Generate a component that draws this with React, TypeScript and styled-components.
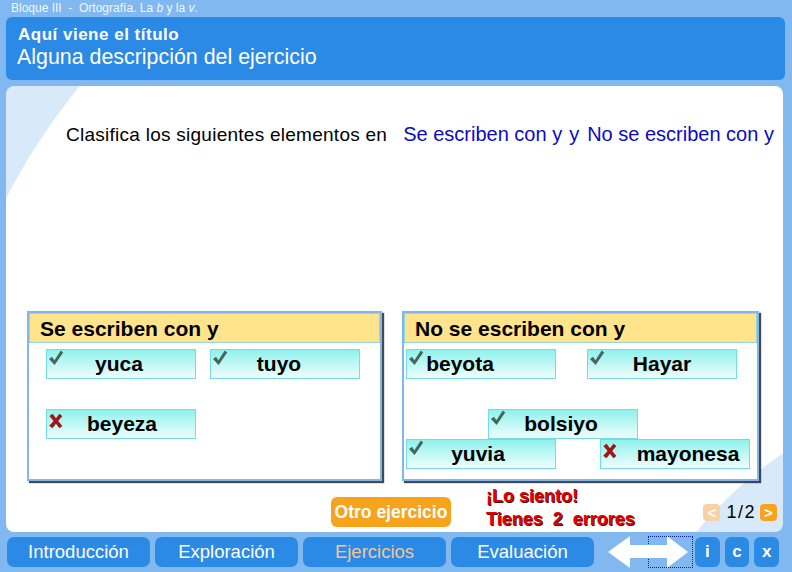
import React from "react";
import styled, { createGlobalStyle } from "styled-components";

const GlobalStyle = createGlobalStyle`
  html, body {
    margin: 0;
    padding: 0;
  }
  body {
    font-family: "Liberation Sans", Arial, sans-serif;
    background: #80b8ef;
  }
`;

const Frame = styled.div`
  width: 792px;
  height: 572px;
  display: flex;
  flex-direction: column;
  background: #80b8ef;
  overflow: hidden;
`;

const TopStrip = styled.div`
  height: 17px;
  padding-left: 11px;
  font-size: 12px;
  line-height: 16px;
  color: #f1f7fe;
  white-space: pre;
`;

const Header = styled.header`
  height: 64px;
  margin: 0 7px 0 6px;
  box-sizing: border-box;
  padding: 8px 0 0 12px;
  background: #2b8ae6;
  border-radius: 6px;
  color: #fff;
`;

const Title = styled.h1`
  margin: 0;
  font-size: 17px;
  font-weight: bold;
  line-height: 20px;
  letter-spacing: 0.5px;
`;

const Description = styled.p`
  margin: 0 0 0 -1px;
  font-size: 21.4px;
  line-height: 24px;
`;

const Panel = styled.main`
  flex: 1;
  margin: 6px 9px 0 6px;
  border-radius: 8px;
  display: flex;
  flex-direction: column;
  background:
    radial-gradient(circle at 560px 400px, transparent 629px, #d8e9fa 630px),
    radial-gradient(circle at 1000px 700px, #d8e9fa 400px, transparent 401px),
    #fff;
`;

const Instruction = styled.p`
  margin: 0;
  padding: 37px 0 0 60px;
  font-size: 19px;
  line-height: 22px;
  letter-spacing: 0.26px;
  color: #000;
  white-space: nowrap;
`;

const Category = styled.span<{ $gap: number }>`
  margin-left: ${(p) => p.$gap}px;
  font-size: 20px;
  letter-spacing: 0;
  color: #0a0ac8;
`;

const BinsRow = styled.div`
  display: flex;
  gap: 20px;
  margin-top: 165px;
  padding-left: 21px;
`;

const Bin = styled.section<{ $width: number }>`
  width: ${(p) => p.$width}px;
  height: 170px;
  box-sizing: border-box;
  border: 2px solid #80b8ee;
  background: #fff;
  box-shadow: 2px 2px 1px rgba(40, 40, 50, 0.85);
  display: flex;
  flex-direction: column;
`;

const BinTitle = styled.h2`
  margin: 0;
  height: 30px;
  box-sizing: border-box;
  padding: 1px 0 0 10px;
  background: #ffe48b;
  border: 1px solid #93d8df;
  font-size: 21px;
  font-weight: bold;
  line-height: 27px;
  color: #000;
`;

const DropArea = styled.div`
  position: relative;
  flex: 1;
`;

const Tile = styled.div<{ $x: number; $y: number; $shift: number }>`
  position: absolute;
  left: ${(p) => p.$x}px;
  top: ${(p) => p.$y}px;
  width: 150px;
  height: 30px;
  box-sizing: border-box;
  border: 1px solid #74dde1;
  background: linear-gradient(#8ff2ec, #f0fdfc);
  font-size: 21px;
  font-weight: bold;
  line-height: 28px;
  text-align: center;
  text-indent: ${(p) => p.$shift * 2}px;
  color: #000;
  white-space: nowrap;
`;

const Mark = styled.svg<{ $top: number }>`
  position: absolute;
  left: 1px;
  top: ${(p) => p.$top}px;
  width: 16px;
  height: 16px;
`;

const Footer = styled.div`
  height: 51px;
  display: flex;
  align-items: flex-start;
  padding: 0 6px 0 325px;
`;

const OtherButton = styled.button`
  margin-top: 16px;
  width: 120px;
  height: 30px;
  padding: 0;
  border: none;
  border-radius: 6px;
  background: #f7a31c;
  color: #fff;
  font-family: "Liberation Sans", Arial, sans-serif;
  font-size: 17.5px;
  font-weight: bold;
  white-space: nowrap;
`;

const Feedback = styled.div`
  margin: 4px 0 0 35px;
  color: #e20000;
  font-size: 18px;
  font-weight: bold;
  line-height: 23px;
  white-space: pre;
  text-shadow: 1px 1px 0 #4a0000;
`;

const Pager = styled.div`
  margin: 22px 0 0 auto;
  display: flex;
  align-items: center;
  gap: 4px;
`;

const PageButton = styled.span<{ $disabled?: boolean }>`
  width: 17px;
  height: 17px;
  border-radius: 4px;
  background: ${(p) => (p.$disabled ? "#f8d2a4" : "#f7a31c")};
  color: #fff;
  font-size: 15px;
  font-weight: bold;
  line-height: 17px;
  text-align: center;
`;

const PageCount = styled.span`
  font-size: 18px;
  line-height: 18px;
  letter-spacing: 1.5px;
  color: #000;
  padding-left: 2px;
`;

const NavBar = styled.nav`
  height: 40px;
  display: flex;
  align-items: center;
  padding: 0 8px 0 7px;
`;

const Tab = styled.button<{ $active?: boolean }>`
  width: 145px;
  height: 30px;
  margin-right: 5px;
  padding: 0;
  border: none;
  border-radius: 7px;
  background: #2b8ae6;
  color: ${(p) => (p.$active ? "#f5c595" : "#fff")};
  font-family: "Liberation Sans", Arial, sans-serif;
  font-size: 18.5px;
`;

const ArrowButton = styled.button<{ $focused?: boolean }>`
  width: ${(p) => (p.$focused ? 45 : 40)}px;
  height: 32px;
  padding: 0;
  box-sizing: border-box;
  border: ${(p) => (p.$focused ? "1px dotted #14209a" : "none")};
  background: transparent;
  display: flex;
  align-items: center;
  svg {
    display: block;
    margin-left: ${(p) => (p.$focused ? -1 : 0)}px;
  }
`;

const ArrowGroup = styled.div`
  display: flex;
  margin-left: 9px;
  margin-right: 2px;
`;

const SmallButton = styled.button`
  width: 25px;
  height: 30px;
  margin-right: 5px;
  padding: 0;
  border: none;
  border-radius: 6px;
  background: #2b8ae6;
  color: #fff;
  font-family: "Liberation Sans", Arial, sans-serif;
  font-size: 17px;
  font-weight: bold;
`;

const CheckMark = () => (
  <Mark $top={0} viewBox="0 0 16 16">
    <path d="M1 9 L4 6.8 L6.4 10.2 L12.8 0.6 L15.2 2.6 L6.6 15 Z" fill="#46655b" />
  </Mark>
);

const CrossMark = () => (
  <Mark $top={3} viewBox="0 0 16 16">
    <path
      d="M1.4 3 L4.6 0.8 L8 5.2 L11.4 0.8 L14.4 3 L10.2 8 L14.4 13 L11.4 15.2 L8 10.8 L4.4 15.2 L1.2 12.8 L5.6 8 Z"
      fill="#a0161a"
    />
  </Mark>
);

const Arrow = ({ dir }: { dir: "left" | "right" }) => (
  <svg width="40" height="32" viewBox="0 0 40 32">
    <polygon
      points={
        dir === "left"
          ? "0,16 22,0 22,9 40,9 40,22 22,22 22,32"
          : "40,16 19,0 19,9 0,9 0,22 19,22 19,32"
      }
      fill="#fff"
    />
  </svg>
);

type Item = { word: string; ok: boolean; x: number; y: number; shift: number };

const bins: { title: string; width: number; items: Item[] }[] = [
  {
    title: "Se escriben con y",
    width: 355,
    items: [
      { word: "yuca", ok: true, x: 17, y: 6, shift: -2 },
      { word: "tuyo", ok: true, x: 181, y: 6, shift: -6 },
      { word: "beyeza", ok: false, x: 17, y: 66, shift: 1 },
    ],
  },
  {
    title: "No se escriben con y",
    width: 357,
    items: [
      { word: "beyota", ok: true, x: 2, y: 6, shift: -21 },
      { word: "Hayar", ok: true, x: 183, y: 6, shift: 0 },
      { word: "bolsiyo", ok: true, x: 84, y: 66, shift: -2 },
      { word: "yuvia", ok: true, x: 2, y: 96, shift: -3 },
      { word: "mayonesa", ok: false, x: 196, y: 96, shift: 13 },
    ],
  },
];

const tabs = ["Introducción", "Exploración", "Ejercicios", "Evaluación"];

export default function App() {
  return (
    <>
      <GlobalStyle />
      <Frame>
        <TopStrip>
          Bloque III  -  Ortografía. La <i>b</i> y la <i>v</i>.
        </TopStrip>
        <Header>
          <Title>Aquí viene el título</Title>
          <Description>Alguna descripción del ejercicio</Description>
        </Header>
        <Panel>
          <Instruction>
            Clasifica los siguientes elementos en
            <Category $gap={16}>Se escriben con y</Category>
            <Category $gap={7}>y</Category>
            <Category $gap={8}>No se escriben con y</Category>
          </Instruction>
          <BinsRow>
            {bins.map((bin) => (
              <Bin key={bin.title} $width={bin.width}>
                <BinTitle>{bin.title}</BinTitle>
                <DropArea>
                  {bin.items.map((item) => (
                    <Tile key={item.word} $x={item.x} $y={item.y} $shift={item.shift}>
                      {item.ok ? <CheckMark /> : <CrossMark />}
                      {item.word}
                    </Tile>
                  ))}
                </DropArea>
              </Bin>
            ))}
          </BinsRow>
          <Footer>
            <OtherButton>Otro ejercicio</OtherButton>
            <Feedback>{"¡Lo siento!\nTienes  2  errores"}</Feedback>
            <Pager>
              <PageButton $disabled>&lt;</PageButton>
              <PageCount>1/2</PageCount>
              <PageButton>&gt;</PageButton>
            </Pager>
          </Footer>
        </Panel>
        <NavBar>
          {tabs.map((t) => (
            <Tab key={t} $active={t === "Ejercicios"}>
              {t}
            </Tab>
          ))}
          <ArrowGroup>
            <ArrowButton>
              <Arrow dir="left" />
            </ArrowButton>
            <ArrowButton $focused>
              <Arrow dir="right" />
            </ArrowButton>
          </ArrowGroup>
          <SmallButton>i</SmallButton>
          <SmallButton>c</SmallButton>
          <SmallButton>x</SmallButton>
        </NavBar>
      </Frame>
    </>
  );
}
